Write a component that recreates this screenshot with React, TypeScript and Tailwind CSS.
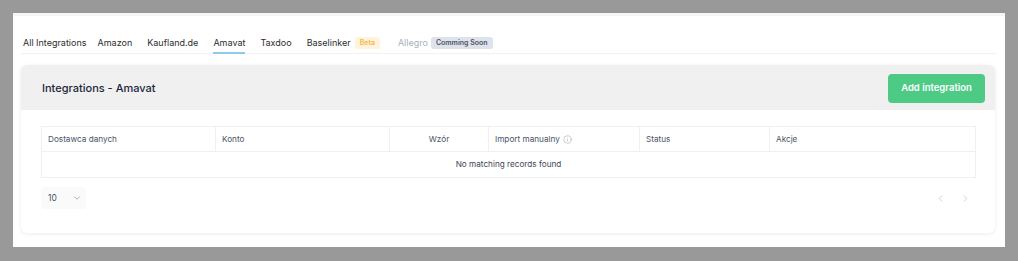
import { ChevronDown, ChevronLeft, ChevronRight, Info } from "lucide-react";

const tabs = ["All Integrations", "Amazon", "Kaufland.de", "Amavat", "Taxdoo"];

const columns = [
  { label: "Dostawca danych", width: "w-[174px]", center: false },
  { label: "Konto", width: "w-[174px]", center: false },
  { label: "Wzór", width: "w-[99px]", center: true },
  { label: "Import manualny", width: "w-[151px]", center: false, info: true },
  { label: "Status", width: "w-[130px]", center: false },
  { label: "Akcje", width: "flex-1", center: false },
];

export default function App() {
  return (
    <div className="h-[261px] w-[1018px] bg-[#999999] pl-[13px] pt-[13px] font-['Inter',sans-serif]">
      <div className="h-[234px] w-[992px] border-t-[3px] border-[#f6f6f6] bg-white pt-[21px]">
        {/* tabs */}
        <div className="ml-[8px] flex h-[17px] w-[975px] items-start border-b border-[#f2f2f2] pl-[2px]">
          {tabs.map((tab, i) => (
            <div
              key={tab}
              className={
                "relative h-[16px] text-[9px] leading-[12px] text-[#2d2d2d] " +
                (i === 0 ? "mr-[11px]" : "mr-[15px]")
              }
            >
              {tab}
              {tab === "Amavat" && (
                <span className="absolute bottom-[-1px] left-0 h-[2px] w-full bg-[#8fcaed]" />
              )}
            </div>
          ))}
          <div className="mr-[18px] flex h-[16px] items-start gap-[4px]">
            <span className="text-[9px] leading-[12px] text-[#2d2d2d]">Baselinker</span>
            <span className="rounded-[3px] bg-[#fff3dc] px-[5px] text-[7px] font-semibold leading-[12px] text-[#f6b84a]">
              Beta
            </span>
          </div>
          <div className="flex h-[16px] items-start gap-[3px]">
            <span className="text-[9px] leading-[12px] text-[#a9b0bc]">Allegro</span>
            <span className="rounded-[3px] bg-[#dee2ea] px-[5px] text-[7px] font-semibold leading-[12px] text-[#4b5565]">
              Comming Soon
            </span>
          </div>
        </div>

        {/* card */}
        <div className="ml-[8px] mt-[11px] h-[168px] w-[974px] overflow-hidden rounded-[6px] bg-white shadow-[0_1px_4px_rgba(0,0,0,0.08)]">
          <div className="flex h-[45px] items-center justify-between bg-[#f0f0f0] pl-[21px] pr-[10px]">
            <h2 className="pt-[1px] text-[11px] font-medium text-[#1c2639]">Integrations - Amavat</h2>
            <button className="mt-[1px] h-[29px] w-[97px] rounded-[4px] bg-[#4dca84] pt-[1px] text-[9.5px] font-semibold text-white">
              Add integration
            </button>
          </div>

          <div className="px-[20px] pt-[16px]">
            <div className="w-[935px] border border-[#f0f0f0]">
              <div className="flex h-[25px] border-b border-[#f0f0f0]">
                {columns.map((c, i) => (
                  <div
                    key={c.label}
                    className={
                      "flex items-center px-[6px] text-[8.2px] text-[#4a5466] " +
                      c.width +
                      (c.center ? " justify-center" : " justify-start") +
                      (i < columns.length - 1 ? " border-r border-[#f0f0f0]" : "")
                    }
                  >
                    {c.label}
                    {c.info && <Info className="ml-[3px] h-[9px] w-[9px] text-[#a0a7b3]" strokeWidth={1.5} />}
                  </div>
                ))}
              </div>
              <div className="flex h-[25px] items-center justify-center text-[8.2px] text-[#3f4656]">
                No matching records found
              </div>
            </div>

            <div className="mt-[9px] flex items-center justify-between">
              <div className="flex h-[22px] w-[45px] items-center gap-[15px] rounded-[4px] bg-[#fafafa] pl-[7px]">
                <span className="text-[8.5px] text-[#4a5466]">10</span>
                <ChevronDown className="h-[10px] w-[10px] text-[#8d95a3]" strokeWidth={1.8} />
              </div>
              <div className="mr-[4px] flex items-center gap-[14px]">
                <ChevronLeft className="h-[11px] w-[11px] text-[#c3c8d0]" strokeWidth={1.8} />
                <ChevronRight className="h-[11px] w-[11px] text-[#c3c8d0]" strokeWidth={1.8} />
              </div>
            </div>
          </div>
        </div>
      </div>
    </div>
  );
}
